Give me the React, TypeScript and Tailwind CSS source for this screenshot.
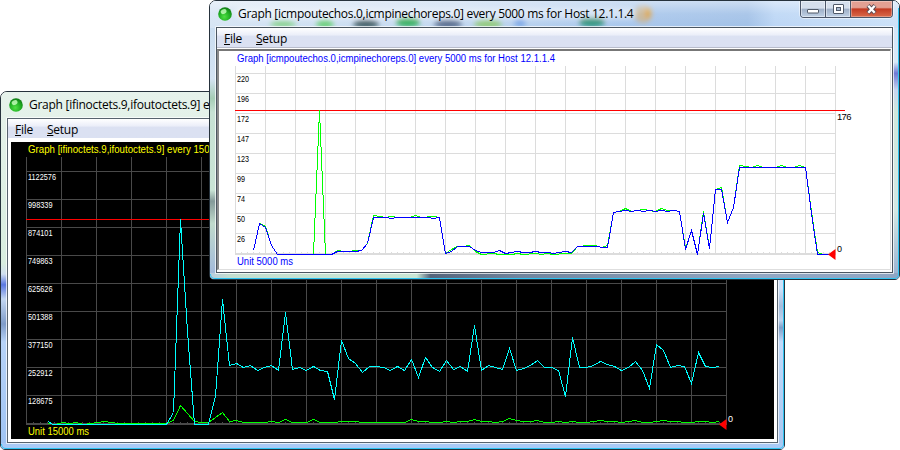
import React from 'react';

type Point = [number, number];

interface Series {
  color: string;
  points: Point[];
}

interface AxisLabel {
  text: string;
  width: number;
}

interface GraphProps {
  box: [number, number, number, number];
  title: string;
  titleWidth: number;
  unit: string;
  unitWidth: number;
  textColor: string;
  labelColor: string;
  gridColor: string;
  left: number;
  top: number;
  firstRow: number;
  colStep: number;
  rowStep: number;
  labels: AxisLabel[];
  baseline: number;
  peak: number;
  peakLabel?: string;
  series: Series[];
}

const icmpLabels = [
  { text: '220', width: 12 },
  { text: '196', width: 12 },
  { text: '172', width: 12 },
  { text: '147', width: 12 },
  { text: '123', width: 12 },
  { text: '99', width: 8 },
  { text: '74', width: 8 },
  { text: '50', width: 8 },
  { text: '26', width: 8 },
];

const octetLabels = [
  { text: '1122576', width: 28 },
  { text: '998339', width: 24.5 },
  { text: '874101', width: 24.5 },
  { text: '749863', width: 24.5 },
  { text: '625626', width: 24.5 },
  { text: '501388', width: 24.5 },
  { text: '377150', width: 24.5 },
  { text: '252912', width: 24.5 },
  { text: '128675', width: 24.5 },
];

const echoReplies: Point[] = [
  [253, 250], [259, 223], [265, 226], [271, 245], [277, 254], [313, 254], [319, 110], [325, 254],
  [331, 254], [337, 250], [343, 251], [349, 251], [355, 250], [361, 250], [367, 243], [373, 215],
  [379, 216], [385, 217], [391, 216], [397, 217], [409, 217], [415, 215], [421, 217], [433, 216],
  [439, 217], [445, 253], [451, 249], [457, 246], [463, 246], [469, 245], [475, 251], [481, 254],
  [493, 253], [499, 254], [511, 254], [517, 253], [523, 254], [535, 253], [541, 254], [547, 253],
  [553, 254], [565, 253], [571, 253], [577, 246], [589, 245], [595, 245], [601, 247], [607, 245],
  [613, 212], [619, 211], [625, 208], [631, 211], [637, 210], [643, 209], [649, 210], [655, 211],
  [661, 208], [667, 210], [673, 210], [679, 211], [685, 248], [691, 230], [697, 254], [703, 211],
  [709, 248], [715, 189], [721, 187], [727, 222], [733, 207], [739, 165], [745, 166], [751, 167],
  [757, 165], [763, 167], [775, 167], [781, 165], [787, 167], [793, 167], [799, 165], [805, 167],
  [811, 211], [817, 252], [823, 254], [831, 254],
];

const echoRequests: Point[] = [
  [253, 250], [259, 223], [265, 227], [271, 245], [277, 254], [331, 254], [337, 251], [355, 251],
  [361, 250], [367, 243], [373, 217], [385, 217], [391, 218], [397, 217], [427, 217], [433, 218],
  [439, 217], [445, 253], [451, 251], [457, 246], [469, 246], [475, 250], [481, 252], [493, 252],
  [499, 250], [505, 253], [511, 252], [517, 251], [523, 252], [529, 252], [535, 251], [541, 252],
  [547, 252], [553, 253], [559, 252], [565, 251], [571, 252], [577, 246], [598, 246], [601, 247],
  [607, 247], [613, 212], [619, 211], [625, 210], [631, 211], [637, 210], [643, 211], [649, 210],
  [655, 211], [661, 210], [667, 211], [673, 210], [679, 211], [685, 249], [691, 230], [697, 254],
  [703, 213], [709, 248], [715, 189], [721, 189], [727, 222], [733, 207], [739, 167], [805, 167],
  [811, 213], [817, 254], [831, 254],
];

const octetsOut: Point[] = [
  [48, 423], [55, 424], [62, 422], [69, 423], [76, 422], [83, 424], [90, 423], [97, 422], [104, 421],
  [111, 422], [118, 423], [166, 423], [173, 420], [180, 405], [187, 413], [194, 421], [201, 422],
  [208, 422], [215, 417], [222, 412], [229, 421], [236, 420], [243, 422], [264, 422], [271, 421],
  [278, 422], [285, 419], [292, 422], [306, 422], [313, 419], [320, 422], [334, 422], [341, 421],
  [355, 421], [362, 422], [404, 422], [411, 419], [418, 421], [425, 421], [432, 422], [439, 422],
  [446, 421], [453, 422], [460, 421], [467, 421], [474, 419], [481, 421], [488, 421], [495, 422],
  [502, 421], [509, 418], [516, 420], [523, 421], [530, 421], [537, 420], [544, 422], [551, 422],
  [558, 421], [565, 422], [572, 421], [579, 422], [586, 422], [593, 421], [600, 420], [607, 421],
  [614, 421], [621, 422], [628, 421], [635, 420], [642, 422], [649, 422], [656, 421], [663, 420],
  [670, 421], [677, 421], [684, 422], [691, 422], [698, 421], [705, 421], [712, 422], [719, 421],
];

const octetsIn: Point[] = [
  [48, 421], [52, 424], [166, 424], [173, 412], [180, 219], [187, 331], [194, 424], [208, 424],
  [215, 396], [222, 299], [229, 365], [236, 363], [243, 367], [250, 365], [257, 370], [264, 367],
  [271, 365], [278, 370], [285, 312], [292, 369], [299, 367], [306, 370], [313, 366], [320, 370],
  [327, 371], [334, 399], [341, 340], [348, 358], [355, 363], [362, 372], [369, 366], [376, 366],
  [383, 367], [390, 370], [397, 366], [404, 370], [411, 359], [418, 377], [425, 357], [432, 367],
  [439, 371], [446, 360], [453, 369], [460, 366], [467, 371], [474, 325], [481, 370], [488, 365],
  [495, 367], [502, 369], [509, 348], [516, 370], [523, 368], [530, 365], [537, 360], [544, 367],
  [551, 367], [558, 370], [565, 396], [572, 337], [579, 367], [586, 367], [593, 365], [600, 361],
  [607, 364], [614, 366], [621, 370], [628, 367], [635, 361], [642, 370], [649, 388], [656, 344],
  [663, 350], [670, 367], [677, 365], [684, 366], [691, 383], [698, 352], [705, 366], [712, 367],
  [719, 366],
];

const toPath = (points: Point[]) =>
  points.map(([x, y], i) => `${i === 0 ? 'M' : 'L'}${x + 0.5} ${y + 0.5}`).join(' ');

const Graph: React.FC<GraphProps> = (props) => {
  const { box, left, top, firstRow, colStep, rowStep, baseline, labels, gridColor } = props;
  const right = left + colStep * 20;
  const columns = Array.from({ length: 21 }, (_, i) => left + i * colStep);
  const ticks = Array.from({ length: 100 }, (_, i) => left + (i * colStep) / 5);

  return (
    <svg
      className="block flex-none font-['Liberation_Sans',Arial,sans-serif]"
      width={box[2]}
      height={box[3]}
      viewBox={box.join(' ')}
    >
      <g fill={gridColor}>
        {columns.map((x) => (
          <rect key={x} x={x} y={top} width={1} height={baseline - top + 1} />
        ))}
        {labels.map((label, i) => (
          <rect key={label.text} x={left} y={firstRow + i * rowStep} width={right - left + 1} height={1} />
        ))}
        {ticks.map((x) => (
          <rect key={x} x={Math.round(x)} y={baseline - 2} width={1} height={1} />
        ))}
        <rect x={left} y={baseline - 1} width={right - left} height={2} />
      </g>

      <text
        x={left + 2}
        y={top - 4}
        fontSize={10}
        textLength={props.titleWidth}
        lengthAdjust="spacingAndGlyphs"
        fill={props.textColor}
      >
        {props.title}
      </text>
      {labels.map((label, i) => (
        <text
          key={label.text}
          x={left + 2}
          y={firstRow + 9 + i * rowStep}
          fontSize={9}
          textLength={label.width}
          lengthAdjust="spacingAndGlyphs"
          fill={props.labelColor}
        >
          {label.text}
        </text>
      ))}
      <text
        x={left + 2}
        y={baseline + 11}
        fontSize={10}
        textLength={props.unitWidth}
        lengthAdjust="spacingAndGlyphs"
        fill={props.textColor}
      >
        {props.unit}
      </text>

      {/* peak marker */}
      <rect x={left} y={props.peak} width={right - left + 10} height={1} fill="#ff0000" />
      {props.peakLabel && (
        <text x={right + 2} y={props.peak + 10} fontSize={9.5} textLength={14.5} fill={props.labelColor}>
          {props.peakLabel}
        </text>
      )}

      {props.series.map((s) => (
        <path key={s.color} d={toPath(s.points)} fill="none" stroke={s.color} shapeRendering="crispEdges" />
      ))}

      {/* current position */}
      <path d={`M${right - 7} ${baseline + 0.5} l7.5 -5.5 v11 z`} fill="#ff0000" />
      <text x={right + 2} y={baseline - 2} fontSize={9} fill={props.labelColor}>
        0
      </text>
    </svg>
  );
};

const OrbIcon: React.FC<{ id: string }> = ({ id }) => (
  <svg className="flex-none" width={16} height={16} viewBox="0 0 16 16">
    <defs>
      <radialGradient id={id} cx="45%" cy="70%" r="75%">
        <stop offset="0" stopColor="#4fe043" />
        <stop offset="0.55" stopColor="#1fae22" />
        <stop offset="1" stopColor="#0c7012" />
      </radialGradient>
    </defs>
    <circle cx="8" cy="8" r="6.8" fill={`url(#${id})`} />
    <ellipse cx="6.6" cy="5.6" rx="3" ry="2.3" fill="#c9ffbf" opacity="0.8" transform="rotate(-25 6.6 5.6)" />
  </svg>
);

const MenuBar: React.FC = () => (
  <div className="flex h-[19px] flex-none items-center gap-[14px] bg-linear-to-b from-white from-0% via-[#eceff9] via-35% to-[#dbe1f2] to-45% pt-[2px] pl-[7px] text-[12px] leading-[17px] tracking-[-0.25px] text-black">
    <span><u>F</u>ile</span>
    <span><u>S</u>etup</span>
  </div>
);

const WindowButtons: React.FC = () => (
  <div className="flex h-[17px] w-[93px] overflow-hidden rounded-b-[4px] border border-t-0 border-[#4b5669] shadow-[0_0_0_1px_#ffffff80]">
    <div className="flex w-[25px] items-center justify-center border-r border-[#4b5669] bg-linear-to-b from-[#d5dfec] from-45% via-[#9eafc6] via-50% to-[#c1d2e6] shadow-[inset_0_0_0_1px_#ffffff70]">
      <svg width={13} height={11} viewBox="0 0 13 11">
        <rect x="0.5" y="5.5" width="11" height="3.5" rx="0.5" fill="#fff" stroke="#505a69" />
      </svg>
    </div>
    <div className="flex w-[25px] items-center justify-center border-r border-[#4b5669] bg-linear-to-b from-[#d5dfec] from-45% via-[#9eafc6] via-50% to-[#c1d2e6] shadow-[inset_0_0_0_1px_#ffffff70]">
      <svg width={13} height={11} viewBox="0 0 13 11">
        <rect x="1.5" y="0.5" width="10" height="9" rx="0.5" fill="#fff" stroke="#505a69" />
        <rect x="4.5" y="3.5" width="4" height="3" fill="#a9bad0" stroke="#505a69" />
      </svg>
    </div>
    <div className="flex flex-1 items-center justify-center bg-linear-to-b from-[#e3a093] from-40% via-[#c23a22] via-50% to-[#d9694a] shadow-[inset_0_0_0_1px_#ffffff50]">
      <svg width={13} height={11} viewBox="0 0 13 11">
        <path d="M3 1.5 L10 9 M10 1.5 L3 9" stroke="#5b4a52" strokeWidth="4.2" />
        <path d="M3.3 1.8 L9.7 8.7 M9.7 1.8 L3.3 8.7" stroke="#fff" strokeWidth="2.4" />
      </svg>
    </div>
  </div>
);

// blurred desktop seen through the glass frame
const FrontGlass: React.FC = () => (
  <svg className="absolute inset-0" width={689} height={278} viewBox="210 1 689 278">
    <defs>
      <filter id="soft" x="-50%" y="-50%" width="200%" height="200%">
        <feGaussianBlur stdDeviation="2.4" />
      </filter>
      <linearGradient id="bar">
        <stop offset="0" stopColor="#d7e5f4" />
        <stop offset="0.35" stopColor="#c3d8f0" />
        <stop offset="0.6" stopColor="#a9c7ec" />
        <stop offset="0.78" stopColor="#a2c1e7" />
        <stop offset="0.82" stopColor="#bcd6f5" />
        <stop offset="1" stopColor="#cbe1f8" />
      </linearGradient>
      <linearGradient id="shine" x1="0" y1="0" x2="0" y2="1">
        <stop offset="0" stopColor="#ffffff" stopOpacity="0.45" />
        <stop offset="0.5" stopColor="#ffffff" stopOpacity="0.1" />
        <stop offset="1" stopColor="#ffffff" stopOpacity="0" />
      </linearGradient>
      <linearGradient id="bottom">
        <stop offset="0" stopColor="#b9cddd" />
        <stop offset="0.03" stopColor="#c3dfd0" />
        <stop offset="0.3" stopColor="#c9e7d6" />
        <stop offset="0.32" stopColor="#55657c" />
        <stop offset="0.45" stopColor="#71869f" />
        <stop offset="0.8" stopColor="#92a8c4" />
        <stop offset="1" stopColor="#8fa6c4" />
      </linearGradient>
      <linearGradient id="side" x1="0" y1="0" x2="0" y2="1">
        <stop offset="0" stopColor="#c6dbf1" />
        <stop offset="0.28" stopColor="#d4e3f2" />
        <stop offset="0.35" stopColor="#a5cdb5" />
        <stop offset="0.4" stopColor="#c7e2d4" />
        <stop offset="0.68" stopColor="#c9e4d5" />
        <stop offset="0.72" stopColor="#849a99" />
        <stop offset="0.8" stopColor="#c0dacc" />
        <stop offset="1" stopColor="#9fb6dc" />
      </linearGradient>
      <linearGradient id="sideRight" x1="0" y1="0" x2="0" y2="1">
        <stop offset="0" stopColor="#d0e4f9" />
        <stop offset="0.22" stopColor="#d9e9f7" />
        <stop offset="0.26" stopColor="#6f79d5" />
        <stop offset="0.32" stopColor="#c8d5ef" />
        <stop offset="0.4" stopColor="#cfe8dc" />
        <stop offset="0.75" stopColor="#d4e8e4" />
        <stop offset="1" stopColor="#98b0d0" />
      </linearGradient>
    </defs>
    <rect x="210" y="1" width="689" height="278" fill="url(#side)" />
    <rect x="890" y="1" width="9" height="278" fill="url(#sideRight)" />
    <rect x="210" y="1" width="689" height="27" fill="url(#bar)" />
    <rect x="210" y="273" width="689" height="6" fill="url(#bottom)" />
    <g filter="url(#soft)">
      <ellipse cx="283" cy="24" rx="13" ry="3" fill="#7fd083" />
      <ellipse cx="325" cy="24" rx="9" ry="4" fill="#67cf77" />
      <ellipse cx="366" cy="24" rx="13" ry="4" fill="#3c5a62" />
      <ellipse cx="408" cy="22" rx="12" ry="5" fill="#2faf5c" />
      <ellipse cx="448" cy="24" rx="14" ry="4" fill="#52688a" />
      <ellipse cx="488" cy="24" rx="14" ry="4" fill="#8fc976" />
      <ellipse cx="520" cy="23" rx="6" ry="4" fill="#7ba7e6" />
      <ellipse cx="592" cy="22" rx="13" ry="5" fill="#2a937c" />
      <circle cx="643" cy="14" r="9" fill="#c5b59a" />
      <ellipse cx="648" cy="13" rx="3" ry="6" fill="#dba23c" />
      {/* glow behind the caption */}
      <rect x="236" y="7" width="400" height="12" rx="6" fill="#ffffff" opacity="0.45" />
    </g>
    <rect x="210" y="1" width="689" height="26" fill="url(#shine)" />
    <path d="M215.5 27 V273.5 H893.5 V26.5 H215.5" fill="none" stroke="#ffffff" strokeOpacity="0.7" />
    <path d="M898.5 8 V274 Q898.5 278.5 894 278.5 H215 Q210.5 278.5 210.5 274" fill="none" stroke="#2ec4f2" />
  </svg>
);

const BackGlass: React.FC = () => (
  <svg className="absolute inset-0" width={783} height={357} viewBox="1 92 783 357">
    <defs>
      <linearGradient id="backSide" x1="0" y1="0" x2="0" y2="1">
        <stop offset="0" stopColor="#e6f2eb" />
        <stop offset="0.48" stopColor="#d8eddf" />
        <stop offset="0.51" stopColor="#d0dff0" />
        <stop offset="0.54" stopColor="#5b78e0" />
        <stop offset="0.58" stopColor="#c3d7f2" />
        <stop offset="0.65" stopColor="#7f9cc9" />
        <stop offset="0.7" stopColor="#b7d3f8" />
        <stop offset="1" stopColor="#9ec3f3" />
      </linearGradient>
      <linearGradient id="backRight" x1="0" y1="0" x2="0" y2="1">
        <stop offset="0" stopColor="#cfe2fa" />
        <stop offset="0.55" stopColor="#cfe2fa" />
        <stop offset="0.6" stopColor="#a5bddd" />
        <stop offset="0.64" stopColor="#bdd3ee" />
        <stop offset="0.66" stopColor="#7f9fc8" />
        <stop offset="0.7" stopColor="#c3dbfb" />
        <stop offset="1" stopColor="#a9c6ef" />
      </linearGradient>
    </defs>
    <rect x="1" y="92" width="783" height="357" fill="url(#backSide)" />
    <rect x="777" y="92" width="7" height="357" fill="url(#backRight)" />
    <rect x="1" y="443" width="783" height="6" fill="#a9cbf7" />
    <path d="M6.5 118 V443.5 H778.5 V117.5 H6.5" fill="none" stroke="#ffffff" strokeOpacity="0.7" />
    <path d="M783.5 100 V444 Q783.5 448.5 779 448.5 H6 Q1.5 448.5 1.5 444" fill="none" stroke="#2ec4f2" />
  </svg>
);

const App: React.FC = () => {
  return (
    <div className="relative h-[450px] w-[900px] overflow-hidden bg-white font-['Open_Sans','Noto_Sans',sans-serif]">
      {/* octets window */}
      <section className="absolute top-[91px] left-0 flex h-[359px] w-[785px] flex-col overflow-hidden rounded-t-[7px] rounded-b-[5px] border border-[#26323c]">
        <BackGlass />
        <header className="relative flex h-[26px] flex-none items-center gap-[5px] pl-[7px] text-[12px] text-black">
          <OrbIcon id="orbBack" />
          <h1 className="w-[181px] overflow-hidden whitespace-nowrap tracking-[-0.27px]">
            Graph [ifinoctets.9,ifoutoctets.9] every 15000 ms
          </h1>
        </header>
        <div className="relative ml-[6px] flex h-[325px] w-[771px] flex-none flex-col border border-[#57636e] bg-white">
          <MenuBar />
          <div className="mt-[4px] ml-[3px] h-[297px] w-[763px] bg-black">
            <Graph
              box={[11, 142, 763, 297]}
              title="Graph [ifinoctets.9,ifoutoctets.9] every 15000 ms"
              titleWidth={208}
              unit="Unit 15000 ms"
              unitWidth={61}
              textColor="#ffff00"
              labelColor="#ffffff"
              gridColor="#494949"
              left={26}
              top={157}
              firstRow={171}
              colStep={35}
              rowStep={28}
              labels={octetLabels}
              baseline={424}
              peak={219}
              series={[
                { color: '#00ff00', points: octetsOut },
                { color: '#00ffff', points: octetsIn },
              ]}
            />
          </div>
        </div>
      </section>

      {/* icmp window */}
      <section className="absolute top-0 left-[209px] flex h-[280px] w-[691px] flex-col overflow-hidden rounded-t-[7px] rounded-b-[5px] border border-[#26323c]">
        <FrontGlass />
        <header className="relative flex h-[26px] flex-none items-center gap-[5px] pl-[7px] text-[12px] text-black">
          <OrbIcon id="orbFront" />
          <h1 className="flex-1 whitespace-nowrap tracking-[-0.3px]">
            Graph [icmpoutechos.0,icmpinechoreps.0] every 5000 ms for Host 12.1.1.4
          </h1>
          <div className="mr-[6px] self-start">
            <WindowButtons />
          </div>
        </header>
        <div className="relative ml-[6px] flex h-[246px] w-[677px] flex-none flex-col border border-[#4b5661] bg-white">
          <MenuBar />
          <div className="h-px flex-none bg-[#b8bccb]" />
          <div className="mt-px h-[221px] w-[674px] border-t-2 border-r border-b border-l-2 border-t-[#777777] border-r-[#dedede] border-b-[#dedede] border-l-[#8a8a8a] bg-white">
            <Graph
              box={[219, 51, 671, 218]}
              title="Graph [icmpoutechos.0,icmpinechoreps.0] every 5000 ms for Host 12.1.1.4"
              titleWidth={318}
              unit="Unit 5000 ms"
              unitWidth={56}
              textColor="#0000ff"
              labelColor="#000000"
              gridColor="#dcdcdc"
              left={235}
              top={66}
              firstRow={73}
              colStep={30}
              rowStep={20}
              labels={icmpLabels}
              baseline={254}
              peak={110}
              peakLabel="176"
              series={[
                { color: '#00ff00', points: echoReplies },
                { color: '#0000ff', points: echoRequests },
              ]}
            />
          </div>
        </div>
      </section>
    </div>
  );
};

export default App;
